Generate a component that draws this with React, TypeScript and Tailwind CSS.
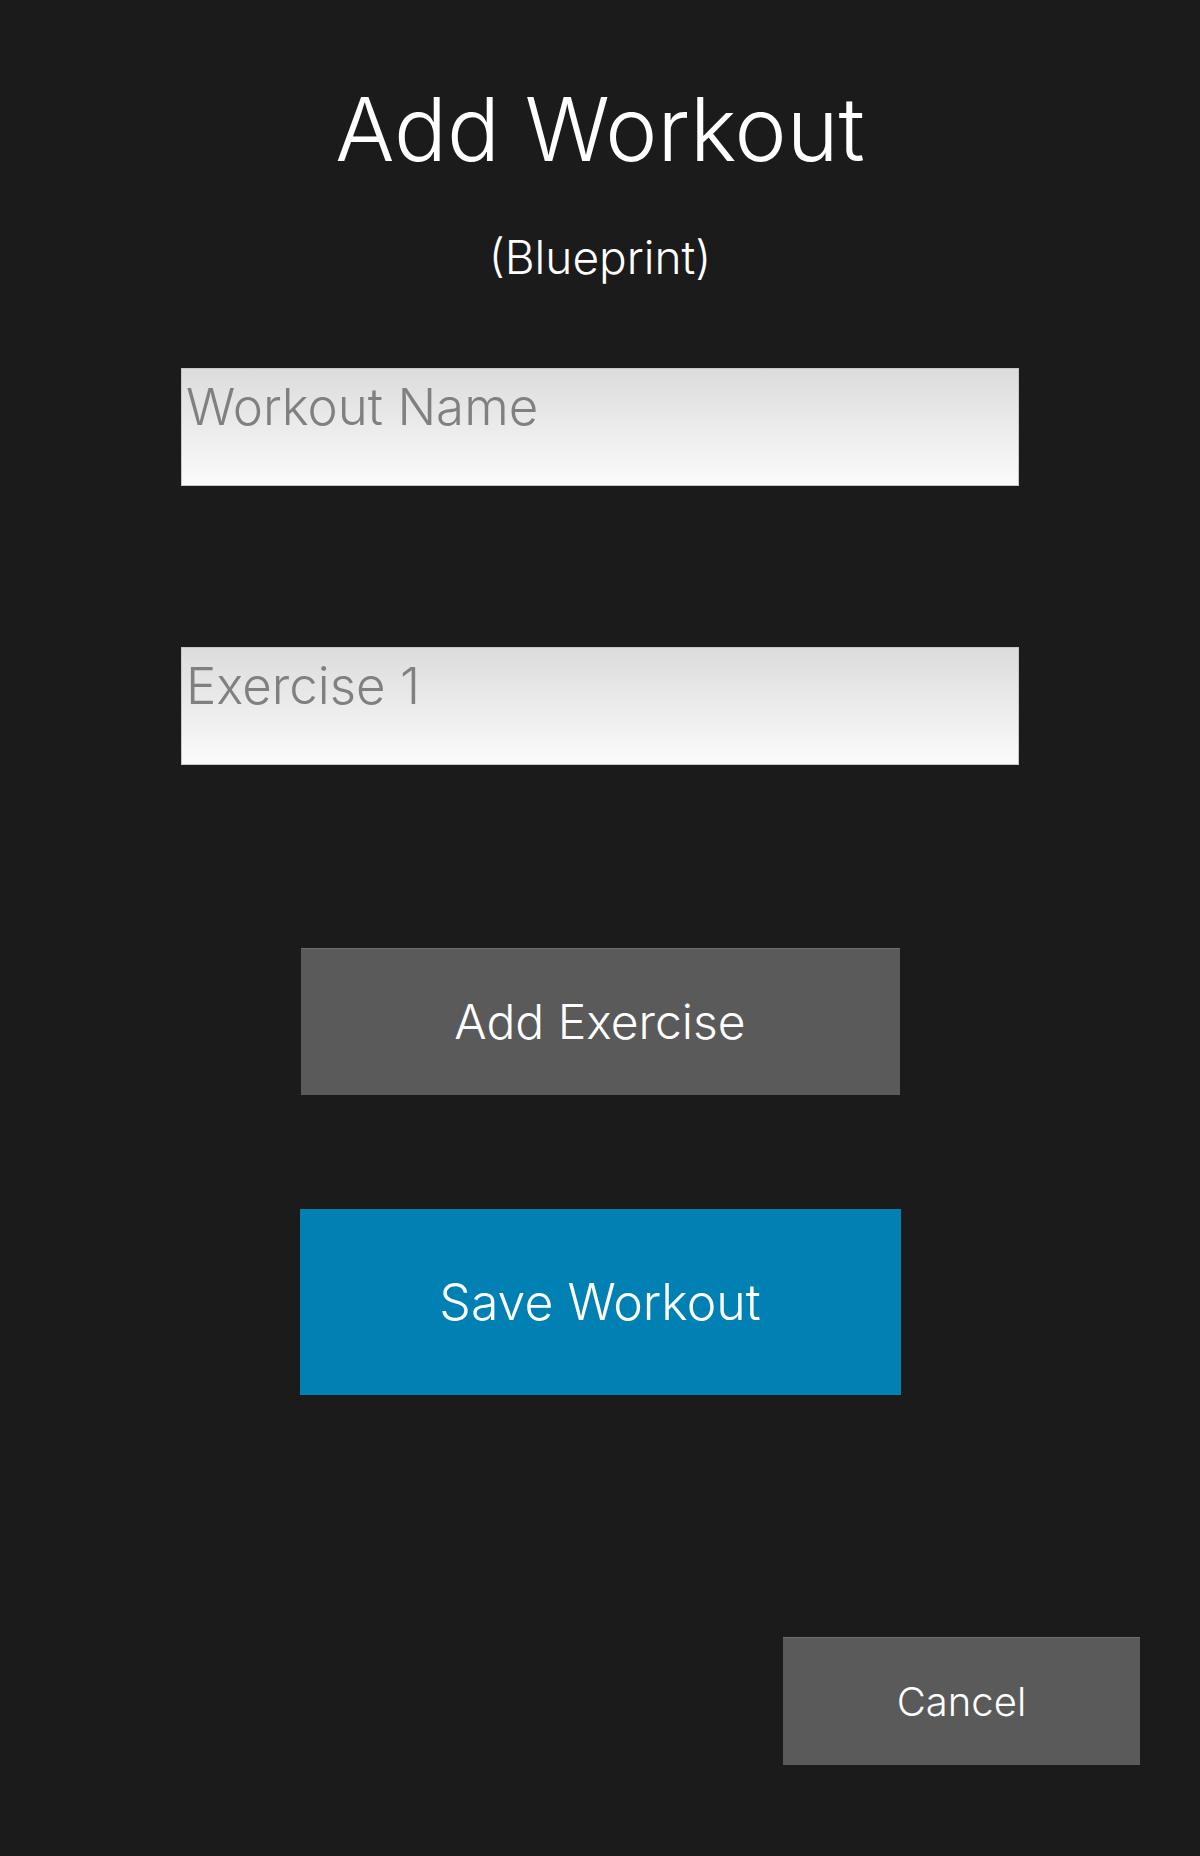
export default function App() {
  const font = { fontFamily: 'Inter, "Noto Sans", sans-serif' };
  return (
    <div className="w-[1200px] h-[1856px] bg-[#1b1b1b] flex flex-col items-center font-light text-white" style={font}>
      <h1 className="mt-[79px] text-[88px] leading-[100px] font-light">Add Workout</h1>
      <div className="mt-[50px] text-[46px] leading-[56px] font-light">(Blueprint)</div>
      <div className="mt-[83px] w-[838px] h-[118px] bg-gradient-to-b from-[#dcdcdc] to-[#fbfbfb] border border-[#c8c8c8] px-[4px] pt-[7px] text-[51px] leading-[62px] text-[#808080]">
        Workout Name
      </div>
      <div className="mt-[161px] w-[838px] h-[118px] bg-gradient-to-b from-[#dcdcdc] to-[#fbfbfb] border border-[#c8c8c8] px-[4px] pt-[7px] text-[51px] leading-[62px] text-[#808080]">
        Exercise 1
      </div>
      <div className="mt-[183px] w-[599px] h-[147px] bg-[#5a5a5a] border-t border-[#6e6e6e] flex items-center justify-center text-[48px]">
        Add Exercise
      </div>
      <div className="mt-[114px] w-[601px] h-[186px] bg-[#0180b3] flex items-center justify-center text-[50px]">
        Save Workout
      </div>
      <div className="w-full flex justify-end pr-[60px] mt-[242px]">
        <div className="w-[357px] h-[128px] bg-[#5a5a5a] border-t border-[#6e6e6e] flex items-center justify-center text-[40px]">
          Cancel
        </div>
      </div>
    </div>
  );
}
